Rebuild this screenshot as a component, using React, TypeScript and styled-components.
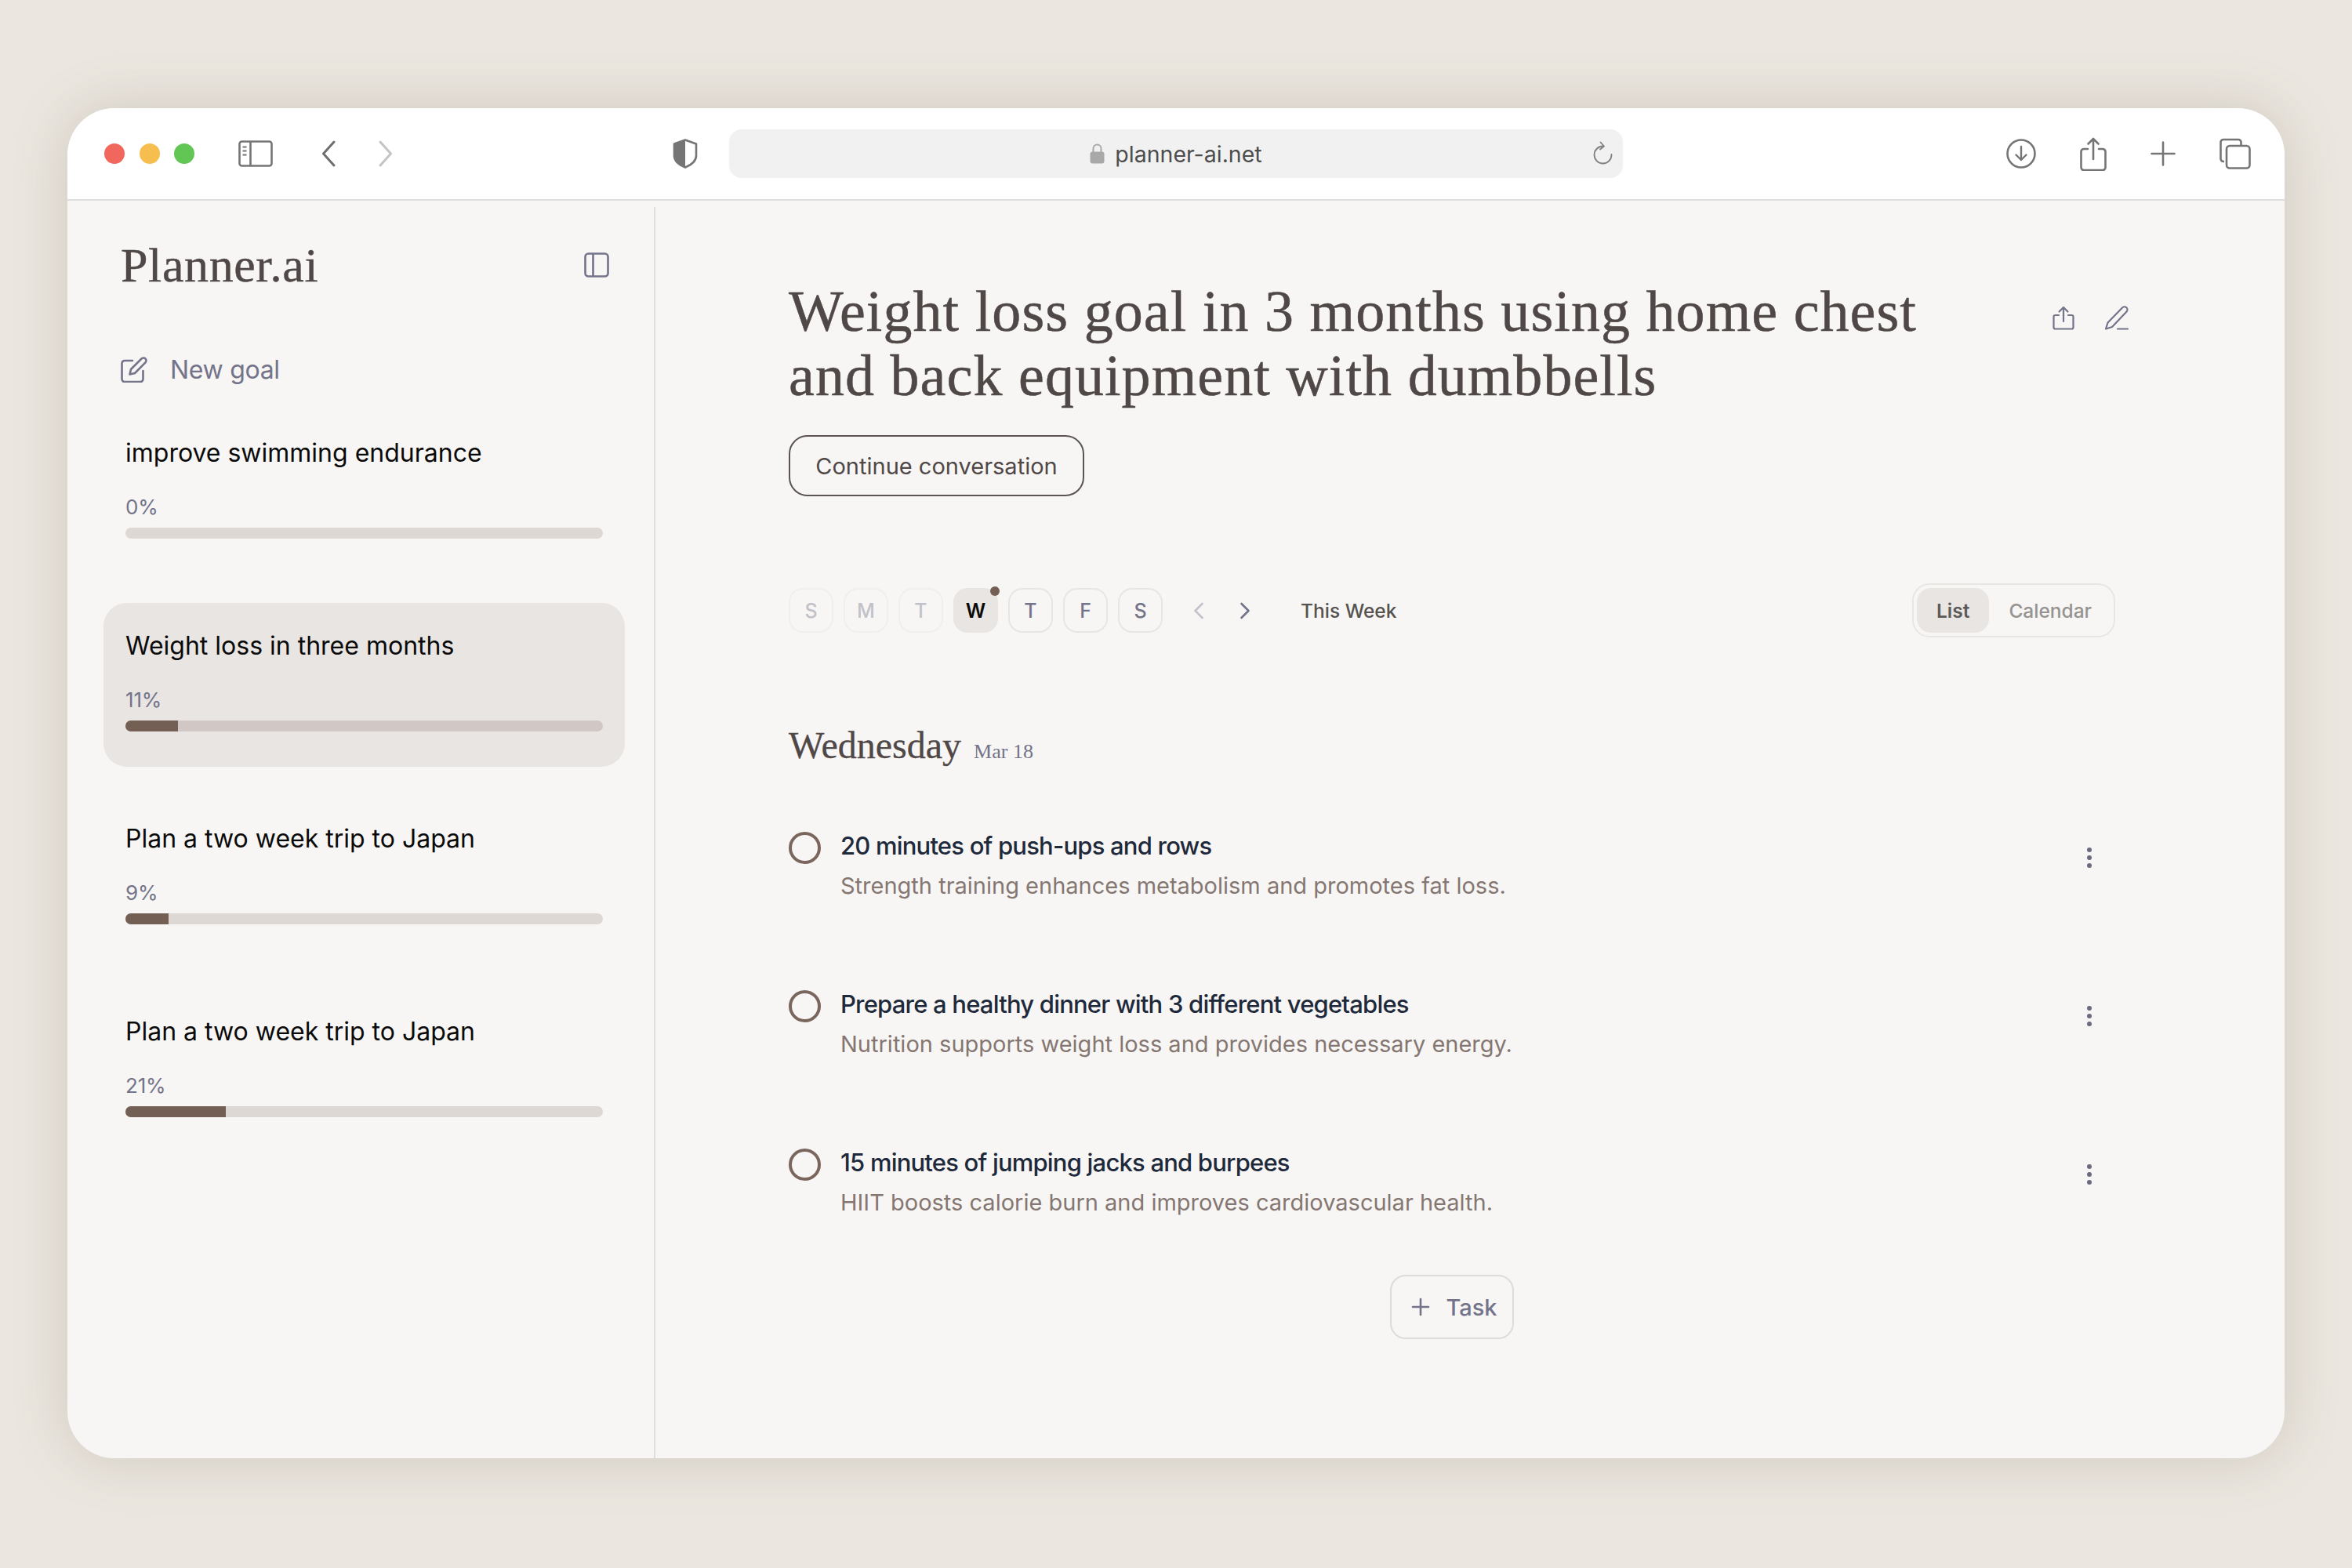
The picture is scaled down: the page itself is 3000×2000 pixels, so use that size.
import React from "react";
import styled, { createGlobalStyle } from "styled-components";

const sans = `Inter, "Liberation Sans", sans-serif`;
const serif = `"Liberation Serif", serif`;

const GlobalStyle = createGlobalStyle`
  html, body {
    margin: 0;
    background: #ebe6df;
  }
  * {
    box-sizing: border-box;
  }
`;

const goals = [
  { title: "improve swimming endurance", percent: 0 },
  { title: "Weight loss in three months", percent: 11, active: true },
  { title: "Plan a two week trip to Japan", percent: 9 },
  { title: "Plan a two week trip to Japan", percent: 21 },
];

const days = [
  { label: "S", past: true },
  { label: "M", past: true },
  { label: "T", past: true },
  { label: "W", today: true },
  { label: "T" },
  { label: "F" },
  { label: "S" },
];

const tasks = [
  {
    title: "20 minutes of push-ups and rows",
    note: "Strength training enhances metabolism and promotes fat loss.",
  },
  {
    title: "Prepare a healthy dinner with 3 different vegetables",
    note: "Nutrition supports weight loss and provides necessary energy.",
  },
  {
    title: "15 minutes of jumping jacks and burpees",
    note: "HIIT boosts calorie burn and improves cardiovascular health.",
  },
];

const App = () => (
  <Page>
    <GlobalStyle />
    <Window>
      <Toolbar>
        <Lights>
          <Light $color="#f1675d" />
          <Light $color="#f6bd4f" />
          <Light $color="#62c655" />
        </Lights>
        <ToolIcon $left={56}>
          <svg width="44" height="34" viewBox="0 0 44 34" fill="none" stroke="#757575" strokeWidth="2.6">
            <rect x="1.5" y="1.5" width="41" height="31" rx="3" />
            <path d="M15.5 2v30" />
            <path d="M5.5 8.5h5M5.5 13.5h5M5.5 18.5h5" strokeWidth="2" />
          </svg>
        </ToolIcon>
        <ToolIcon $left={62}>
          <svg width="18" height="34" viewBox="0 0 18 34" fill="none" stroke="#6e6e6e" strokeWidth="3" strokeLinecap="round" strokeLinejoin="round">
            <path d="M16 2 2.5 17 16 32" />
          </svg>
        </ToolIcon>
        <ToolIcon $left={55}>
          <svg width="18" height="34" viewBox="0 0 18 34" fill="none" stroke="#c4c4c4" strokeWidth="3" strokeLinecap="round" strokeLinejoin="round">
            <path d="M2 2 15.5 17 2 32" />
          </svg>
        </ToolIcon>
        <ToolIcon $left={357}>
          <svg width="32" height="38" viewBox="0 0 32 38" fill="none">
            <path d="M16 1.5 30 6.5v15c0 6.5-5.5 11.5-14 15-8.5-3.5-14-8.5-14-15v-15z" stroke="#757575" strokeWidth="2.6" strokeLinejoin="round" />
            <path d="M16 1.5 2 6.5v15c0 6.5 5.5 11.5 14 15z" fill="#757575" />
          </svg>
        </ToolIcon>
        <AddressBar>
          <Address>
            <svg width="19" height="26" viewBox="0 0 19 26" fill="none">
              <path d="M4.5 12V6.5a5 5 0 0 1 10 0V12" stroke="#a8a8a8" strokeWidth="2" />
              <rect x="0.5" y="10.5" width="18" height="15" rx="3" fill="#a8a8a8" />
            </svg>
            <span>planner-ai.net</span>
          </Address>
          <Reload>
            <svg width="26" height="30" viewBox="0 0 26 30" fill="none" stroke="#808080" strokeWidth="1.8" strokeLinecap="round" strokeLinejoin="round">
              <path d="M14 6.5A11 11 0 1 0 24.5 17" />
              <path d="M10.5 1.5 15 6.5l-5 4" />
            </svg>
          </Reload>
        </AddressBar>
        <ToolActions>
          <svg width="38" height="38" viewBox="0 0 38 38" fill="none" stroke="#757575" strokeWidth="2.6" strokeLinecap="round" strokeLinejoin="round">
            <circle cx="19" cy="19" r="17.5" />
            <path d="M19 10v17M12.5 20.5 19 27l6.5-6.5" strokeWidth="2.4" />
          </svg>
          <svg width="34" height="43" viewBox="0 0 34 43" fill="none" stroke="#757575" strokeWidth="2.6" strokeLinecap="round" strokeLinejoin="round">
            <path d="M10 15H5a3.5 3.5 0 0 0-3.5 3.5v20A3.5 3.5 0 0 0 5 42h24a3.5 3.5 0 0 0 3.5-3.5v-20A3.5 3.5 0 0 0 29 15h-5" />
            <path d="M17 28V2M10.5 8.5 17 2l6.5 6.5" />
          </svg>
          <svg width="32" height="32" viewBox="0 0 32 32" fill="none" stroke="#757575" strokeWidth="2.6" strokeLinecap="round">
            <path d="M16 1.5v29M1.5 16h29" />
          </svg>
          <svg width="40" height="40" viewBox="0 0 40 40" fill="none" stroke="#757575" strokeWidth="2.6" strokeLinejoin="round">
            <path d="M6 30H5a3.5 3.5 0 0 1-3.5-3.5v-21A3.5 3.5 0 0 1 5 2h19a3.5 3.5 0 0 1 3.5 3.5V9" />
            <rect x="9" y="10" width="29.5" height="28.5" rx="4" />
          </svg>
        </ToolActions>
      </Toolbar>
      <Body>
        <Sidebar>
          <Brand>
            <BrandName>Planner.ai</BrandName>
            <svg width="32" height="32" viewBox="0 0 32 32" fill="none" stroke="#73738a" strokeWidth="2.6">
              <rect x="1.5" y="1.5" width="29" height="29" rx="4" />
              <path d="M11.5 2v28" />
            </svg>
          </Brand>
          <NewGoal>
            <svg width="34" height="33" viewBox="0 0 34 33" fill="none" stroke="#73738a" strokeWidth="2.6" strokeLinecap="round" strokeLinejoin="round">
              <path d="M15 5H5a3.5 3.5 0 0 0-3.5 3.5v20A3.5 3.5 0 0 0 5 32h20a3.5 3.5 0 0 0 3.5-3.5V18" />
              <path d="M26.5 2.5a3.4 3.4 0 0 1 5 4.8L18 21l-6.5 1.5L13 16z" />
            </svg>
            <span>New goal</span>
          </NewGoal>
          <GoalList>
            {goals.map((goal, i) => (
              <Goal key={i} $active={goal.active}>
                <GoalTitle>{goal.title}</GoalTitle>
                <GoalPercent>{goal.percent}%</GoalPercent>
                <Track $active={goal.active}>
                  <Fill style={{ width: `${goal.percent}%` }} />
                </Track>
              </Goal>
            ))}
          </GoalList>
        </Sidebar>
        <Main>
          <Heading>
            <Title>
              Weight loss goal in 3 months using home chest
              <br />
              and back equipment with dumbbells
            </Title>
            <HeadingActions>
              <svg width="28" height="31" viewBox="0 0 28 31" fill="none" stroke="#73738a" strokeWidth="2.2" strokeLinecap="round" strokeLinejoin="round">
                <path d="M8 12H3.5a2 2 0 0 0-2 2v13.5a2 2 0 0 0 2 2h21a2 2 0 0 0 2-2V14a2 2 0 0 0-2-2H20" />
                <path d="M14 20V2M8.5 7.5 14 2l5.5 5.5" />
              </svg>
              <svg width="32" height="31" viewBox="0 0 32 31" fill="none" stroke="#73738a" strokeWidth="2.2" strokeLinecap="round" strokeLinejoin="round">
                <path d="M23 2.5a3.6 3.6 0 0 1 5.5 5L10 27l-8 2.5L4.5 21.5z" />
                <path d="M17 29.5h13" />
              </svg>
            </HeadingActions>
          </Heading>
          <ContinueButton>Continue conversation</ContinueButton>
          <WeekRow>
            <Days>
              {days.map((day, i) => (
                <Day key={i} $past={day.past} $today={day.today}>
                  {day.label}
                </Day>
              ))}
            </Days>
            <WeekNav>
              <svg width="14" height="22" viewBox="0 0 14 22" fill="none" stroke="#c2c2cb" strokeWidth="2.6" strokeLinecap="round" strokeLinejoin="round">
                <path d="M11.5 2 2.5 11l9 9" />
              </svg>
              <svg width="14" height="22" viewBox="0 0 14 22" fill="none" stroke="#73738a" strokeWidth="2.6" strokeLinecap="round" strokeLinejoin="round">
                <path d="M2.5 2l9 9-9 9" />
              </svg>
            </WeekNav>
            <WeekLabel>This Week</WeekLabel>
            <ViewToggle>
              <ViewOption $active>List</ViewOption>
              <ViewOption>Calendar</ViewOption>
            </ViewToggle>
          </WeekRow>
          <DayHeading>
            <DayName>Wednesday</DayName>
            <DayDate>Mar 18</DayDate>
          </DayHeading>
          <TaskList>
            {tasks.map((task) => (
              <Task key={task.title}>
                <Check />
                <TaskText>
                  <TaskTitle>{task.title}</TaskTitle>
                  <TaskNote>{task.note}</TaskNote>
                </TaskText>
                <svg width="8" height="28" viewBox="0 0 8 28" fill="#6b6b80">
                  <circle cx="4" cy="4" r="3" />
                  <circle cx="4" cy="14" r="3" />
                  <circle cx="4" cy="24" r="3" />
                </svg>
              </Task>
            ))}
          </TaskList>
          <AddTask>
            <svg width="24" height="24" viewBox="0 0 24 24" fill="none" stroke="#73738a" strokeWidth="2.6" strokeLinecap="round">
              <path d="M12 2v20M2 12h20" />
            </svg>
            Task
          </AddTask>
        </Main>
      </Body>
    </Window>
  </Page>
);

export default App;

const Page = styled.div`
  width: 3000px;
  height: 2000px;
  padding: 138px 86px 140px;
`;

const Window = styled.div`
  height: 1722px;
  display: flex;
  flex-direction: column;
  overflow: hidden;
  border-radius: 60px;
  background: #f7f6f4;
  box-shadow: 0 0 70px rgba(110, 95, 80, 0.22);
`;

const Toolbar = styled.div`
  height: 118px;
  flex: none;
  display: flex;
  align-items: center;
  padding: 0 43px 0 47px;
  background: #fff;
  border-bottom: 2px solid #dededc;
`;

const Lights = styled.div`
  display: flex;
  gap: 18.5px;
`;

const Light = styled.span<{ $color: string }>`
  width: 26px;
  height: 26px;
  border-radius: 50%;
  background: ${(p) => p.$color};
`;

const ToolIcon = styled.div<{ $left: number }>`
  display: flex;
  margin-left: ${(p) => p.$left}px;
`;

const AddressBar = styled.div`
  width: 1140px;
  height: 62px;
  margin-left: 40px;
  position: relative;
  display: flex;
  align-items: center;
  justify-content: center;
  border-radius: 16px;
  background: #f1f1f1;
`;

const Address = styled.div`
  display: flex;
  align-items: center;
  gap: 13px;
  font: 400 28.5px ${sans};
  color: #4d4d4d;
`;

const Reload = styled.div`
  position: absolute;
  right: 13px;
  top: 15px;
  display: flex;
`;

const ToolActions = styled.div`
  margin-left: auto;
  display: flex;
  align-items: center;
  gap: 56px;
`;

const Body = styled.div`
  flex: 1;
  display: flex;
  min-height: 0;
`;

const Sidebar = styled.aside`
  width: 748px;
  flex: none;
  padding: 0 37px 0 46px;
`;

const Brand = styled.div`
  height: 86px;
  margin-top: 39px;
  padding: 0 20px 0 22px;
  display: flex;
  align-items: center;
  justify-content: space-between;
`;

const BrandName = styled.div`
  font: 400 62px ${serif};
  letter-spacing: 0.6px;
  -webkit-text-stroke: 0.4px #4f4847;
  color: #4f4847;
`;

const NewGoal = styled.div`
  margin-top: 71px;
  padding-left: 22px;
  display: flex;
  align-items: center;
  gap: 29px;
  font: 400 32px ${sans};
  letter-spacing: -0.3px;
  color: #73738a;
`;

const GoalList = styled.div`
  margin-top: 32px;
  display: flex;
  flex-direction: column;
  gap: 37px;
`;

const Goal = styled.div<{ $active?: boolean }>`
  height: 209px;
  padding: 34px 28px 0;
  border-radius: 30px;
  background: ${(p) => (p.$active ? "#e8e5e2" : "transparent")};
`;

const GoalTitle = styled.div`
  font: 400 32px/42px ${sans};
  color: #0a0a0a;
`;

const GoalPercent = styled.div`
  margin-top: 31px;
  font: 400 26px/34px ${sans};
  letter-spacing: -0.2px;
  color: #73738a;
`;

const Track = styled.div<{ $active?: boolean }>`
  height: 14px;
  margin-top: 9px;
  overflow: hidden;
  border-radius: 7px;
  background: ${(p) => (p.$active ? "#d1c8c5" : "#ddd8d4")};
`;

const Fill = styled.div`
  height: 100%;
  background: #735f54;
`;

const Main = styled.main`
  flex: 1;
  padding: 100px 216px 0 172px;
  position: relative;

  &::before {
    content: "";
    position: absolute;
    left: 0;
    top: 8px;
    bottom: 0;
    width: 2px;
    background: #dededc;
  }
`;

const Heading = styled.div`
  display: flex;
  justify-content: space-between;
  align-items: flex-start;
`;

const Title = styled.h1`
  margin: 0;
  font: 400 74px/82px ${serif};
  letter-spacing: 1.05px;
  -webkit-text-stroke: 0.5px #4f4847;
  color: #4f4847;
`;

const HeadingActions = styled.div`
  display: flex;
  margin: 34px -18px 0 0;
  gap: 38px;
`;

const ContinueButton = styled.div`
  width: 377px;
  height: 78px;
  margin-top: 35px;
  display: flex;
  align-items: center;
  justify-content: center;
  border: 2px solid #5c5452;
  border-radius: 24px;
  font: 400 29px ${sans};
  color: #4f4847;
`;

const WeekRow = styled.div`
  margin-top: 111px;
  height: 69px;
  display: flex;
  align-items: center;
`;

const Days = styled.div`
  display: flex;
  gap: 13px;
`;

const Day = styled.div<{ $past?: boolean; $today?: boolean }>`
  width: 57px;
  height: 57px;
  position: relative;
  display: flex;
  align-items: center;
  justify-content: center;
  border-radius: 18px;
  border: 2px solid ${(p) => (p.$today ? "#e8e5e2" : "#e8e6e3")};
  background: ${(p) => (p.$today ? "#e8e5e2" : "transparent")};
  font: ${(p) => (p.$today ? 600 : 500)} 25px ${sans};
  color: ${(p) => (p.$today ? "#0a0a0a" : "#73738a")};
  opacity: ${(p) => (p.$past ? 0.4 : 1)};

  ${(p) =>
    p.$today &&
    `&::after {
      content: "";
      position: absolute;
      top: -4px;
      right: -4px;
      width: 12px;
      height: 12px;
      border-radius: 50%;
      background: #735f54;
    }`}
`;

const WeekNav = styled.div`
  margin-left: 39px;
  display: flex;
  gap: 45px;
`;

const WeekLabel = styled.div`
  margin-left: 64px;
  font: 500 24.5px ${sans};
  color: #55534f;
`;

const ViewToggle = styled.div`
  margin-left: auto;
  width: 259px;
  height: 69px;
  padding: 4px;
  display: flex;
  align-items: center;
  border: 2px solid #e8e6e3;
  border-radius: 22px;
  font: 500 24.5px ${sans};
`;

const ViewOption = styled.div<{ $active?: boolean }>`
  height: 57px;
  padding: 0 25px;
  display: flex;
  align-items: center;
  border-radius: 18px;
  background: ${(p) => (p.$active ? "#e8e5e2" : "transparent")};
  font-weight: ${(p) => (p.$active ? 600 : 500)};
  color: ${(p) => (p.$active ? "#5c5a58" : "#959391")};
`;

const DayHeading = styled.div`
  margin-top: 110px;
  display: flex;
  align-items: baseline;
  gap: 16px;
`;

const DayName = styled.div`
  font: 400 48px/56px ${serif};
  -webkit-text-stroke: 0.3px #4f4847;
  color: #4f4847;
`;

const DayDate = styled.div`
  font: 400 26px ${serif};
  color: #73738a;
`;

const TaskList = styled.div`
  margin-top: 80px;
  display: flex;
  flex-direction: column;
  gap: 81px;
`;

const Task = styled.div`
  height: 121px;
  display: flex;
  align-items: flex-start;
  padding-right: 29px;

  > svg {
    margin-top: 21px;
    margin-left: auto;
  }
`;

const Check = styled.span`
  width: 41px;
  height: 41px;
  margin-top: 2px;
  flex: none;
  border: 4px solid #7a665c;
  border-radius: 50%;
`;

const TaskText = styled.div`
  margin-left: 25px;
`;

const TaskTitle = styled.div`
  font: 500 31px/40px ${sans};
  letter-spacing: -0.8px;
  color: #1e293b;
`;

const TaskNote = styled.div`
  margin-top: 12px;
  font: 400 29px/38px ${sans};
  color: #857672;
`;

const AddTask = styled.div`
  width: 158px;
  height: 82px;
  margin: 42px auto 0;
  padding-left: 6px;
  display: flex;
  align-items: center;
  justify-content: center;
  gap: 20px;
  border: 2px solid #dedbd8;
  border-radius: 20px;
  font: 500 29px ${sans};
  color: #73738a;
`;
